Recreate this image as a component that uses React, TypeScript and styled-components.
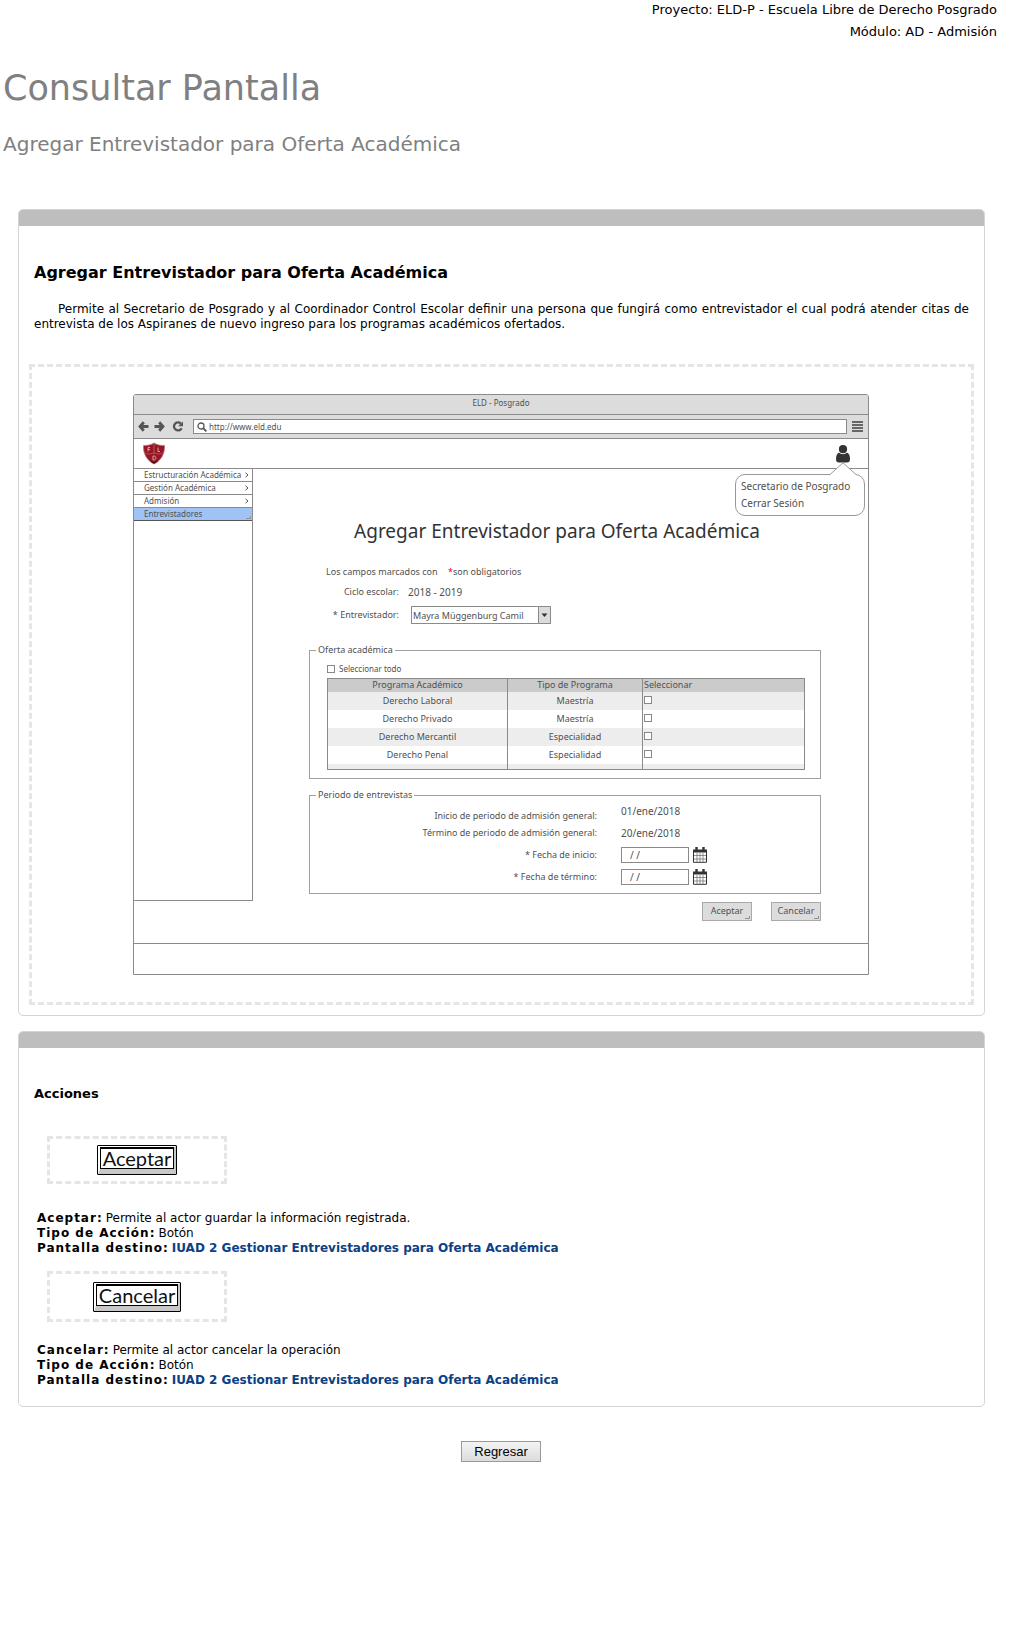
import React from "react";
import styled, { createGlobalStyle } from "styled-components";

const GlobalStyle = createGlobalStyle`
  *, *::before, *::after { box-sizing: border-box; }
  body {
    margin: 0;
    background: #fff;
    color: #000;
    font-family: Verdana, "DejaVu Sans", sans-serif;
    font-size: 12px;
    line-height: 15px;
  }
`;

/* ---------- page ---------- */

const Page = styled.div`
  padding: 0 39px 40px 3px;
`;

const ProjectInfo = styled.header`
  display: grid;
  gap: 2px;
  text-align: right;
  font-size: 13px;
  line-height: 20px;

  p { margin: 0; }
`;

const Title = styled.h1`
  margin: 24px 0 0;
  color: gray;
  font-size: 35px;
  font-weight: normal;
  line-height: 44px;
`;

const Subtitle = styled.h2`
  margin: 20px 0 51px;
  color: gray;
  font-size: 20px;
  font-weight: normal;
  line-height: 28px;
`;

const Panel = styled.section`
  margin: 0 12px 15px 15px;
  border: 1px solid #d0d5d5;
  border-radius: 5px;
  overflow: hidden;

  &::before {
    content: "";
    display: block;
    height: 16px;
    background: #bebebe;
  }
`;

const PanelBody = styled.div<{ $bottom: number }>`
  padding: 34px 10px ${(p) => p.$bottom}px;
`;

const PanelTitle = styled.h3<{ $small?: boolean }>`
  margin: 0 0 ${(p) => (p.$small ? 30 : 16)}px;
  padding: 0 5px;
  font-size: ${(p) => (p.$small ? 13 : 16)}px;
  line-height: ${(p) => (p.$small ? 24 : 26)}px;
`;

const Description = styled.p`
  margin: 0 0 32px;
  padding: 0 5px;
  text-align: justify;
  text-indent: 24px;
`;

const Frame = styled.div`
  display: flex;
  justify-content: center;
  padding: 27px 25px 27px 24px;
  border: 3px dashed #e5e5e5;
`;

/* ---------- mockup window ---------- */

const line = "#8a8a8a";

const Window = styled.div`
  flex: 0 1 736px;
  border: 1px solid ${line};
  border-radius: 3px 3px 0 0;
  background: #fff;
  color: #505050;
  font-family: "Noto Sans", "Open Sans", sans-serif;
  font-size: 9px;
  line-height: 16px;

  input, select, button { font: inherit; color: inherit; }
`;

const TitleBar = styled.div`
  height: 19px;
  background: #dcdcdc;
  border-radius: 2px 2px 0 0;
  font-size: 8px;
  text-align: center;
`;

const Toolbar = styled.div`
  display: flex;
  align-items: center;
  gap: 5px;
  height: 25px;
  padding: 0 5px 0 4px;
  background: #dcdcdc;
  border: solid ${line};
  border-width: 1px 0;
`;

const AddressBar = styled.label`
  flex: 1;
  display: flex;
  align-items: center;
  gap: 2px;
  height: 15px;
  margin-left: 4px;
  padding: 0 3px;
  border: 1px solid ${line};
  background: #fff;

  input {
    flex: 1;
    min-width: 0;
    height: 12px;
    padding: 0;
    border: 0;
    outline: 0;
    font-size: 8px;
  }
`;

const Reload = styled.span`
  display: flex;
  margin-left: 2px;
`;

const AppBar = styled.div`
  display: flex;
  justify-content: space-between;
  height: 29px;
  padding: 3px 18px 0 8px;
`;

const Account = styled.div`
  position: relative;
  padding-top: 3px;
`;

const Balloon = styled.div`
  position: absolute;
  z-index: 1;
  top: 32px;
  right: -15px;
  width: 130px;
  padding: 3px 5px;
  border: 1px solid #999;
  border-radius: 10px;
  background: #fff;
  font-size: 10px;
  line-height: 17px;
  white-space: nowrap;

  > svg { position: absolute; top: -13px; right: 8px; }
`;

const Workspace = styled.div`
  display: grid;
  grid-template-columns: 119px 1fr;
  height: 475px;
`;

const Sidebar = styled.nav`
  height: 433px;
  border: solid ${line};
  border-width: 1px 1px 1px 0;

  ul { margin: 0; padding: 0; list-style: none; }
`;

const MenuItem = styled.li<{ $active?: boolean }>`
  border-bottom: 1px solid ${(p) => (p.$active ? "#555" : line)};
  background: ${(p) => (p.$active ? "#a0c3f6" : "#fff")};

  a {
    position: relative;
    display: flex;
    justify-content: space-between;
    align-items: center;
    height: 12px;
    padding: 0 3px 0 10px;
    color: inherit;
    font-size: 8px;
    line-height: 12px;
    text-decoration: none;
  }
`;

const Form = styled.form`
  padding: 48px 47px 0 56px;
  border-top: 1px solid ${line};
`;

const FormTitle = styled.h4`
  margin: 0 16px 19px 0;
  color: #333;
  font-size: 19px;
  font-weight: normal;
  line-height: 28px;
  text-align: center;
`;

const Note = styled.p`
  margin: 0 0 4px;
  padding-left: 17px;

  span { margin-left: 8px; color: red; }
`;

const Field = styled.div`
  display: grid;
  grid-template-columns: 90px 1fr;
  align-items: center;
  column-gap: 9px;
  margin-bottom: 6px;

  > :first-child { text-align: right; }
`;

const Value = styled.span`
  font-size: 10px;
`;

const SelectBox = styled.span`
  position: relative;
  display: block;
  width: 140px;
  height: 18px;
  margin-left: 3px;

  select {
    appearance: none;
    width: 100%;
    height: 100%;
    padding: 0 1px;
    border: 1px solid ${line};
    border-radius: 0;
    background: #fff;
    line-height: 15px;
  }
  svg { position: absolute; top: 0; right: 0; pointer-events: none; }
`;

const Groups = styled.div`
  display: grid;
  gap: 8px;
  margin: 18px 0 8px;
`;

const Group = styled.fieldset<{ $top: number }>`
  min-width: 0;
  margin: 0;
  padding: ${(p) => p.$top}px 15px 8px 17px;
  border: 1px solid #a0a0a0;

  legend { margin-left: -11px; padding: 0 2px; line-height: 16px; }
`;

const Tick = styled.input`
  appearance: none;
  width: 8px;
  height: 8px;
  margin: 0;
  border: 1px solid #888;
  background: #fff;
`;

const SelectAll = styled.label`
  display: flex;
  align-items: center;
  gap: 4px;
  font-size: 8px;
  line-height: 16px;
  margin-bottom: 1px;
`;

const Programs = styled.table`
  width: 100%;
  table-layout: fixed;
  border-collapse: collapse;
  border: 1px solid ${line};
  text-align: center;

  th, td {
    height: 18px;
    padding: 0 1px;
    border-right: 1px solid ${line};
    font-weight: normal;
    line-height: 16px;
  }
  th { height: 13px; line-height: 12px; background: #cbcbcb; }
  tbody tr:nth-child(odd) { background: #ededed; }
  th:last-child, td:last-child { text-align: left; }
  td:last-child { line-height: 8px; }
  tfoot td { height: 6px; background: #ededed; }
`;

const Period = styled.div<{ $gap?: number; $staggered?: boolean }>`
  display: grid;
  grid-template-columns: 270px 1fr;
  column-gap: 24px;
  align-items: center;
  min-height: ${(p) => (p.$staggered ? 21 : 16)}px;
  margin-top: ${(p) => p.$gap ?? 0}px;

  > :first-child { text-align: right; ${(p) => p.$staggered && "align-self: end;"} }
  > :last-child { ${(p) => p.$staggered && "align-self: start;"} }
`;

const DateBox = styled.span`
  display: flex;
  align-items: center;
  gap: 4px;

  input {
    width: 68px;
    height: 16px;
    padding: 0 8px;
    border: 1px solid ${line};
    background: #fff;
    font-size: 10px;
  }
`;

const FormButtons = styled.div`
  display: flex;
  justify-content: flex-end;
  gap: 19px;
`;

const FormButton = styled.button`
  position: relative;
  width: 50px;
  height: 19px;
  padding: 0 0 2px;
  border: 1px solid #aaa;
  border-radius: 0;
  background: #dcdcdc;
`;

const CornerMark = styled.svg`
  position: absolute;
  right: 0;
  bottom: 0;
`;

const WindowFooter = styled.div`
  height: 31px;
  border-top: 1px solid ${line};
`;

/* ---------- actions ---------- */

const ActionFrame = styled.div<{ $height: number }>`
  display: flex;
  align-items: center;
  justify-content: center;
  width: 180px;
  height: ${(p) => p.$height}px;
  margin-left: 18px;
  border: 3px dashed #e5e5e5;
`;

const BevelButton = styled.button`
  padding: 0;
  border: 1px solid #000;
  border-radius: 1px;
  background: #fff;
  color: #111;
  font-family: Lato, Carlito, sans-serif;
  font-size: 20px;
  line-height: 19px;
`;

const BevelEdge = styled.span`
  display: block;
  border: solid;
  border-width: 1px 2px 5px;
  border-color: #fff #c8c8c8 #c8c8c8 #fff;
`;

const BevelFace = styled.span`
  display: block;
  padding: 0 2px;
  border: 1px solid #000;
  border-top-width: 2px;
`;

const Details = styled.dl<{ $top: number }>`
  margin: ${(p) => p.$top}px 0 15px 8px;

  div { display: flex; gap: 3px; }
  dt { font-weight: bold; letter-spacing: 1px; }
  dd { margin: 0; }
  a { color: #0b4183; font-weight: bold; text-decoration: none; }
`;

const BackRow = styled.div`
  display: flex;
  justify-content: center;
  margin: 34px 12px 0 14px;
`;

const BackButton = styled.button`
  width: 80px;
  height: 21px;
  padding: 0;
  border: 1px solid #999;
  border-radius: 0;
  background: linear-gradient(#f4f4f4, #dcdcdc);
  color: #000;
  font: 13px/18px Arial, "Liberation Sans", sans-serif;
`;

/* ---------- drawings ---------- */

const Arrow = ({ flip }: { flip?: boolean }) => (
  <svg width="11" height="11" viewBox="0 0 11 11" aria-hidden="true">
    <path
      d="M2 5.500H10.500M5.800 1.200 2 5.500l3.800 4.300"
      transform={flip ? "rotate(180 5.5 5.5)" : undefined}
      fill="none"
      stroke="#555"
      strokeWidth="2.800"
    />
  </svg>
);

const ReloadIcon = () => (
  <svg width="12" height="11" viewBox="0 0 12 11" aria-hidden="true">
    <path d="M9.600 7.200A4 4 0 1 1 8.800 2.600" fill="none" stroke="#555" strokeWidth="2.300" />
    <path d="M11 .4V5.200H6.200z" fill="#555" />
  </svg>
);

const SearchIcon = () => (
  <svg width="10" height="10" viewBox="0 0 10 10" aria-hidden="true">
    <circle cx="4" cy="4" r="3" fill="none" stroke="#555" strokeWidth="1.3" />
    <path d="m6.2 6.2 3.2 3.2" stroke="#555" strokeWidth="1.8" />
  </svg>
);

const MenuIcon = () => (
  <svg width="11" height="11" viewBox="0 0 11 11" aria-hidden="true">
    <path d="M0 1h11M0 4h11M0 7h11M0 10h11" stroke="#666" strokeWidth="2" />
  </svg>
);

const Shield = () => (
  <svg width="24" height="23" viewBox="0 0 24 23" aria-hidden="true">
    <path
      d="M1.500 3.500C5.500 3.500 9 3 12 1c3 2 6.500 2.500 10.500 2.500.5 7.500-3 15-10.500 18.500C4.500 18.500 1 11 1.500 3.500z"
      fill="#98142c"
      stroke="#b57a72"
      strokeWidth=".8"
    />
    <path d="M12 2v9M3.500 11c3 2 5.500.5 8.500 0 3 .5 5.500 2 8.500 0" fill="none" stroke="#a8653f" />
    <path d="M8 5.500H6v4M8 7.500H6M16 5.500v4h2M11 14v4h1c2.500 0 2.500-4 0-4z" fill="none" stroke="#d9ad72" />
    <path d="M7.500 18.500c1.200 1.200 2.700 2.400 4.500 3.200 1.800-.8 3.300-2 4.500-3.200L12 20z" fill="#4d0c18" />
  </svg>
);

const Person = () => (
  <svg width="14" height="18" viewBox="0 0 14 18" aria-hidden="true">
    <circle cx="7" cy="4.200" r="4.100" fill="#333" />
    <path d="M3 7.500C1 8.500 0 10.500 0 14c0 2.500 1 3.500 3 3.500h8c2 0 3-1 3-3.500 0-3.500-1-5.500-3-6.500-2 2.200-6 2.200-8 0z" fill="#333" />
  </svg>
);

const Pointer = () => (
  <svg width="26" height="14" viewBox="0 0 26 14" aria-hidden="true">
    <path d="M0 12.500 13 .8 26 12.500V14H0z" fill="#fff" />
    <path d="M0 12.500 13 .8 26 12.500" fill="none" stroke="#999" />
  </svg>
);

const Chevron = () => (
  <svg width="4" height="6" viewBox="0 0 4 6" aria-hidden="true">
    <path d="m.5.8 2.500 2.200L.5 5.200" fill="none" stroke="#555" />
  </svg>
);

const Corner = () => (
  <CornerMark width="6" height="4" viewBox="0 0 6 4" aria-hidden="true">
    <path d="M0 2.500h4.500V0" fill="none" stroke="#8a929c" />
  </CornerMark>
);

const DropArrow = () => (
  <svg width="13" height="18" viewBox="0 0 13 18" aria-hidden="true">
    <path d="M.5.5h12v17H.5z" fill="#dcdcdc" stroke={line} />
    <path d="M3.500 7.500h6l-3 3.500z" fill="#333" />
  </svg>
);

const Calendar = () => (
  <svg width="14" height="16" viewBox="0 0 14 16" aria-hidden="true">
    <path d="M.5 3.500h13v11.800H.5z" fill="#fff" stroke="#333" />
    <path d="M0 2.500h14V5.500H0z" fill="#333" />
    <path d="M3.500 0v4M10.500 0v4" stroke="#333" strokeWidth="2.400" />
    <path d="M4 6v9M7 6v9M10 6v9M1 8.500h12M1 12h12" stroke="#666" strokeWidth=".7" />
  </svg>
);

/* ---------- data ---------- */

const menu = ["Estructuración Académica", "Gestión Académica", "Admisión", "Entrevistadores"];

const programs = [
  ["Derecho Laboral", "Maestría"],
  ["Derecho Privado", "Maestría"],
  ["Derecho Mercantil", "Especialidad"],
  ["Derecho Penal", "Especialidad"],
];

const actions = [
  { name: "Aceptar", text: "Permite al actor guardar la información registrada.", height: 48, top: 27 },
  { name: "Cancelar", text: "Permite al actor cancelar la operación", height: 51, top: 21 },
];

const Mockup = () => (
  <Window>
    <TitleBar>ELD - Posgrado</TitleBar>
    <Toolbar>
      <Arrow />
      <Arrow flip />
      <Reload><ReloadIcon /></Reload>
      <AddressBar>
        <SearchIcon />
        <input aria-label="Dirección" defaultValue="http://www.eld.edu" />
      </AddressBar>
      <MenuIcon />
    </Toolbar>
    <AppBar>
      <Shield />
      <Account>
        <Person />
        <Balloon>
          <Pointer />
          <div>Secretario de Posgrado</div>
          <div>Cerrar Sesión</div>
        </Balloon>
      </Account>
    </AppBar>
    <Workspace>
      <Sidebar>
        <ul>
          {menu.map((item, i) => (
            <MenuItem key={item} $active={i === 3}>
              <a href="#">{item}{i === 3 ? <Corner /> : <Chevron />}</a>
            </MenuItem>
          ))}
        </ul>
      </Sidebar>
      <Form>
        <FormTitle>Agregar Entrevistador para Oferta Académica</FormTitle>
        <Note>Los campos marcados con <span>*</span>son obligatorios</Note>
        <Field><span>Ciclo escolar:</span><Value>2018 - 2019</Value></Field>
        <Field>
          <label htmlFor="interviewer">* Entrevistador:</label>
          <SelectBox>
            <select id="interviewer"><option>Mayra Müggenburg Camil</option></select>
            <DropArrow />
          </SelectBox>
        </Field>
        <Groups>
          <Group $top={3}>
            <legend>Oferta académica</legend>
            <SelectAll><Tick type="checkbox" />Seleccionar todo</SelectAll>
            <Programs>
              <colgroup><col width="180" /><col width="135" /><col /></colgroup>
              <thead>
                <tr><th>Programa Académico</th><th>Tipo de Programa</th><th>Seleccionar</th></tr>
              </thead>
              <tbody>
                {programs.map(([name, kind]) => (
                  <tr key={name}>
                    <td>{name}</td>
                    <td>{kind}</td>
                    <td><Tick type="checkbox" aria-label={name} /></td>
                  </tr>
                ))}
              </tbody>
              <tfoot><tr><td /><td /><td /></tr></tfoot>
            </Programs>
          </Group>
          <Group $top={0}>
            <legend>Periodo de entrevistas</legend>
            <Period $staggered><span>Inicio de periodo de admisión general:</span><Value>01/ene/2018</Value></Period>
            <Period $gap={1}><span>Término de periodo de admisión general:</span><Value>20/ene/2018</Value></Period>
            <Period $gap={6}>
              <label htmlFor="start">* Fecha de inicio:</label>
              <DateBox><input id="start" defaultValue="/ /" /><Calendar /></DateBox>
            </Period>
            <Period $gap={6}>
              <label htmlFor="end">* Fecha de término:</label>
              <DateBox><input id="end" defaultValue="/ /" /><Calendar /></DateBox>
            </Period>
          </Group>
        </Groups>
        <FormButtons>
          <FormButton type="button">Aceptar<Corner /></FormButton>
          <FormButton type="button">Cancelar<Corner /></FormButton>
        </FormButtons>
      </Form>
    </Workspace>
    <WindowFooter />
  </Window>
);

export default function App() {
  return (
    <Page>
      <GlobalStyle />
      <ProjectInfo>
        <p>Proyecto: ELD-P - Escuela Libre de Derecho Posgrado</p>
        <p>Módulo: AD - Admisión</p>
      </ProjectInfo>
      <Title>Consultar Pantalla</Title>
      <Subtitle>Agregar Entrevistador para Oferta Académica</Subtitle>

      <Panel>
        <PanelBody $bottom={10}>
          <PanelTitle>Agregar Entrevistador para Oferta Académica</PanelTitle>
          <Description>
            Permite al Secretario de Posgrado y al Coordinador Control Escolar definir una persona que fungirá como
            entrevistador el cual podrá atender citas de entrevista de los Aspiranes de nuevo ingreso para los
            programas académicos ofertados.
          </Description>
          <Frame><Mockup /></Frame>
        </PanelBody>
      </Panel>

      <Panel>
        <PanelBody $bottom={3}>
          <PanelTitle $small>Acciones</PanelTitle>
          {actions.map((a) => (
            <div key={a.name}>
              <ActionFrame $height={a.height}>
                <BevelButton type="button">
                  <BevelEdge><BevelFace>{a.name}</BevelFace></BevelEdge>
                </BevelButton>
              </ActionFrame>
              <Details $top={a.top}>
                <div><dt>{a.name}:</dt><dd>{a.text}</dd></div>
                <div><dt>Tipo de Acción:</dt><dd>Botón</dd></div>
                <div>
                  <dt>Pantalla destino:</dt>
                  <dd><a href="#">IUAD 2 Gestionar Entrevistadores para Oferta Académica</a></dd>
                </div>
              </Details>
            </div>
          ))}
        </PanelBody>
      </Panel>

      <BackRow><BackButton type="button">Regresar</BackButton></BackRow>
    </Page>
  );
}
